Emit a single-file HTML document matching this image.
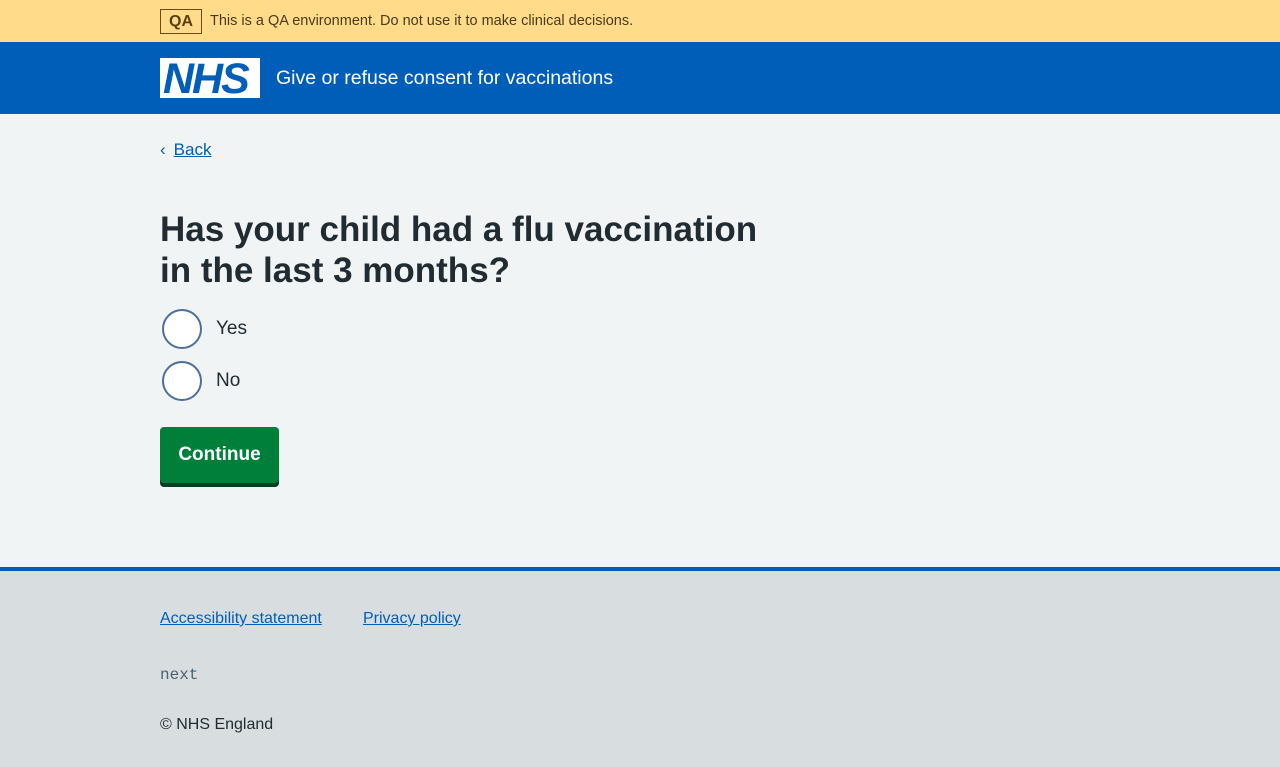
<!DOCTYPE html>
<html><head><style>
*{margin:0;padding:0;box-sizing:border-box}
body{width:1280px;height:767px;font-family:"Liberation Sans",sans-serif;background:#f0f4f5;color:#212b32;overflow:hidden}
.qa{height:42px;background:#ffdb8a;position:relative}
.qa .tag{position:absolute;left:160px;top:9px;width:42px;height:25px;border:1px solid #6b4c14;color:#5a4010;font-weight:bold;font-size:16px;text-align:center;line-height:23px}
.qa .t{position:absolute;left:210px;top:13px;font-size:14.5px;color:#4a3a1a}
.hd{height:72px;background:#005eb8;position:relative}
.logo{position:absolute;left:160px;top:16px;width:100px;height:40px;background:#fff}
.logo span{position:absolute;left:3px;top:-3px;font-size:43px;font-weight:bold;font-style:italic;color:#005eb8;letter-spacing:-2px}
.hd .s{position:absolute;left:276px;top:25px;color:#fff;font-size:19.5px}
a{color:#005eb8;text-decoration:underline}
.back{position:absolute;left:160px;top:140px;font-size:17px}
h1{position:absolute;left:160px;top:209px;font-size:35px;line-height:41px;font-weight:bold;width:620px}
.r{position:absolute;left:162px;width:40px;height:40px;border:2px solid #4c6f9e;border-radius:50%;background:#fff}
.rl{position:absolute;left:216px;font-size:19px}
.btn{position:absolute;left:160px;top:427px;width:119px;background:#007f3b;border-radius:4px;box-shadow:0 4px 0 #00401e;color:#fff;font-weight:bold;font-size:19px;text-align:center;line-height:56px;height:56px}
.ft{position:absolute;left:0;top:567px;width:1280px;height:200px;background:#d8dde0;border-top:4px solid #005eb8}
.ft a{position:absolute;top:39px;font-size:16px}
.nx{position:absolute;left:160px;top:95px;font-family:"Liberation Mono",monospace;font-size:16px;color:#4c6272}
.cp{position:absolute;left:160px;top:145px;font-size:16px}
</style></head><body>
<div class="qa"><div class="tag">QA</div><div class="t">This is a QA environment. Do not use it to make clinical decisions.</div></div>
<div class="hd"><div class="logo"><span>NHS</span></div><div class="s">Give or refuse consent for vaccinations</div></div>
<a class="back" href="#"><span style="display:inline-block;margin-right:8px">‹</span>Back</a>
<h1>Has your child had a flu vaccination in the last 3 months?</h1>
<div class="r" style="top:309px"></div><div class="rl" style="top:318px">Yes</div>
<div class="r" style="top:361px"></div><div class="rl" style="top:370px">No</div>
<div class="btn">Continue</div>
<div class="ft"><a href="#" style="left:160px">Accessibility statement</a><a href="#" style="left:363px">Privacy policy</a>
<div class="nx">next</div><div class="cp">© NHS England</div></div>
</body></html>
